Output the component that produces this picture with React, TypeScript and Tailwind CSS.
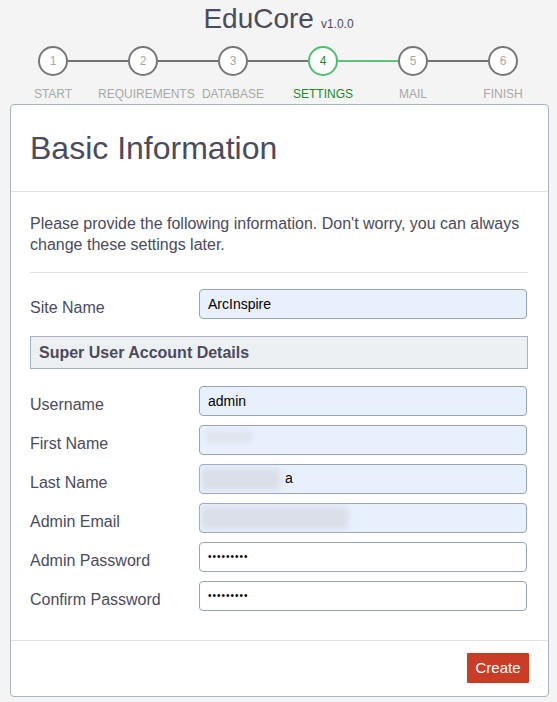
const steps = ["START", "REQUIREMENTS", "DATABASE", "SETTINGS", "MAIL", "FINISH"]
const active = 3

function Stepper() {
  return (
    <div className="flex flex-col">
      <div className="flex items-center ml-[38px] mt-[12px] h-[30px]">
        {steps.map((s, i) => (
          <div key={s} className="flex items-center">
            <div
              className={
                i === active
                  ? "w-[30px] h-[30px] rounded-full border-2 border-[#4fbf6e] bg-white flex items-center justify-center text-[12px] text-[#1e8a25]"
                  : "w-[30px] h-[30px] rounded-full border-2 border-[#777777] bg-white flex items-center justify-center text-[12px] text-[#a8a8a8]"
              }
            >
              {i + 1}
            </div>
            {i < steps.length - 1 && (
              <div className={i === active ? "w-[60px] h-[2px] bg-[#5cc47b]" : "w-[60px] h-[2px] bg-[#737373]"} />
            )}
          </div>
        ))}
      </div>
      <div className="grid grid-cols-[repeat(6,90px)] ml-[8px] mt-[11px]">
        {steps.map((s, i) => (
          <div
            key={s}
            className={
              i === active
                ? "text-center text-[12px] leading-[14px] text-[#22892a] whitespace-nowrap"
                : "text-center text-[12px] leading-[14px] text-[#a8a8a8] whitespace-nowrap"
            }
          >
            {s}
          </div>
        ))}
      </div>
    </div>
  )
}

function Field({ label, children, filled = true }: { label: string; children: React.ReactNode; filled?: boolean }) {
  return (
    <div className="grid grid-cols-[169px_328px]">
      <div className="pt-[9px] text-[16px] leading-[20px] text-[#4b4b5c]">{label}</div>
      <div
        className={
          filled
            ? "h-[30px] rounded-[4px] border border-[#97a4bb] bg-[#e8f0fe] pl-[8px] flex items-center text-[14px] text-black"
            : "h-[30px] rounded-[4px] border border-[#97a4bb] bg-white pl-[8px] flex items-center text-[14px] text-black"
        }
      >
        {children}
      </div>
    </div>
  )
}

export default function App() {
  return (
    <main className="min-h-screen bg-[#f4f4f4] font-['Liberation_Sans',Arial,sans-serif] pb-[5px]">
      <div className="pt-[4px] flex justify-center items-baseline gap-[7px] text-[#4b4b5c]">
        <span className="text-[28px] leading-[30px]">EduCore</span>
        <span className="text-[12px]">v1.0.0</span>
      </div>
      <Stepper />
      <div className="ml-[10px] w-[539px] mt-[3px] bg-white border border-[#a8b2c3] rounded-[4px]">
        <div className="px-[19px] pt-[25px] pb-[24px] border-b border-[#e2e2e2]">
          <h1 className="text-[32px] leading-[37px] text-[#4b4b5c]">Basic Information</h1>
        </div>
        <div className="px-[19px] pt-[21px]">
          <p className="text-[16px] leading-[21px] text-[#4b4b5c] pb-[17px] border-b border-[#e2e2e2] w-[498px]">
            Please provide the following information. Don't worry, you can always change these settings later.
          </p>
          <div className="mt-[16px]">
            <Field label="Site Name">ArcInspire</Field>
          </div>
          <div className="mt-[17px] h-[33px] w-[498px] border border-[#a9b1bd] bg-[#edf0f3] pl-[8px] flex items-center text-[16px] font-bold text-[#4b4b5c]">
            Super User Account Details
          </div>
          <div className="mt-[17px] flex flex-col gap-[9px] pb-[29px]">
            <Field label="Username">admin</Field>
            <Field label="First Name">
              <span className="ml-[-2px] mt-[-6px] w-[46px] h-[12px] bg-[#dde2ea] blur-[2px] opacity-80" />
            </Field>
            <Field label="Last Name">
              <span className="ml-[-6px] w-[78px] h-[22px] bg-[#d9dee7] blur-[3px]" />
              <span className="ml-[5px] mb-[2px]">a</span>
            </Field>
            <Field label="Admin Email">
              <span className="ml-[-6px] w-[146px] h-[22px] bg-[#d9dee7] blur-[3px]" />
            </Field>
            <Field label="Admin Password" filled={false}>
              <span className="text-[10px] tracking-[1px] mb-[2px]">•••••••••</span>
            </Field>
            <Field label="Confirm Password" filled={false}>
              <span className="text-[10px] tracking-[1px] mb-[2px]">•••••••••</span>
            </Field>
          </div>
        </div>
        <div className="border-t border-[#e2e2e2] px-[19px] pt-[12px] pb-[13px] flex justify-end">
          <button className="w-[62px] h-[30px] bg-[#c93d26] text-white text-[15px] rounded-[1px]">Create</button>
        </div>
      </div>
    </main>
  )
}
